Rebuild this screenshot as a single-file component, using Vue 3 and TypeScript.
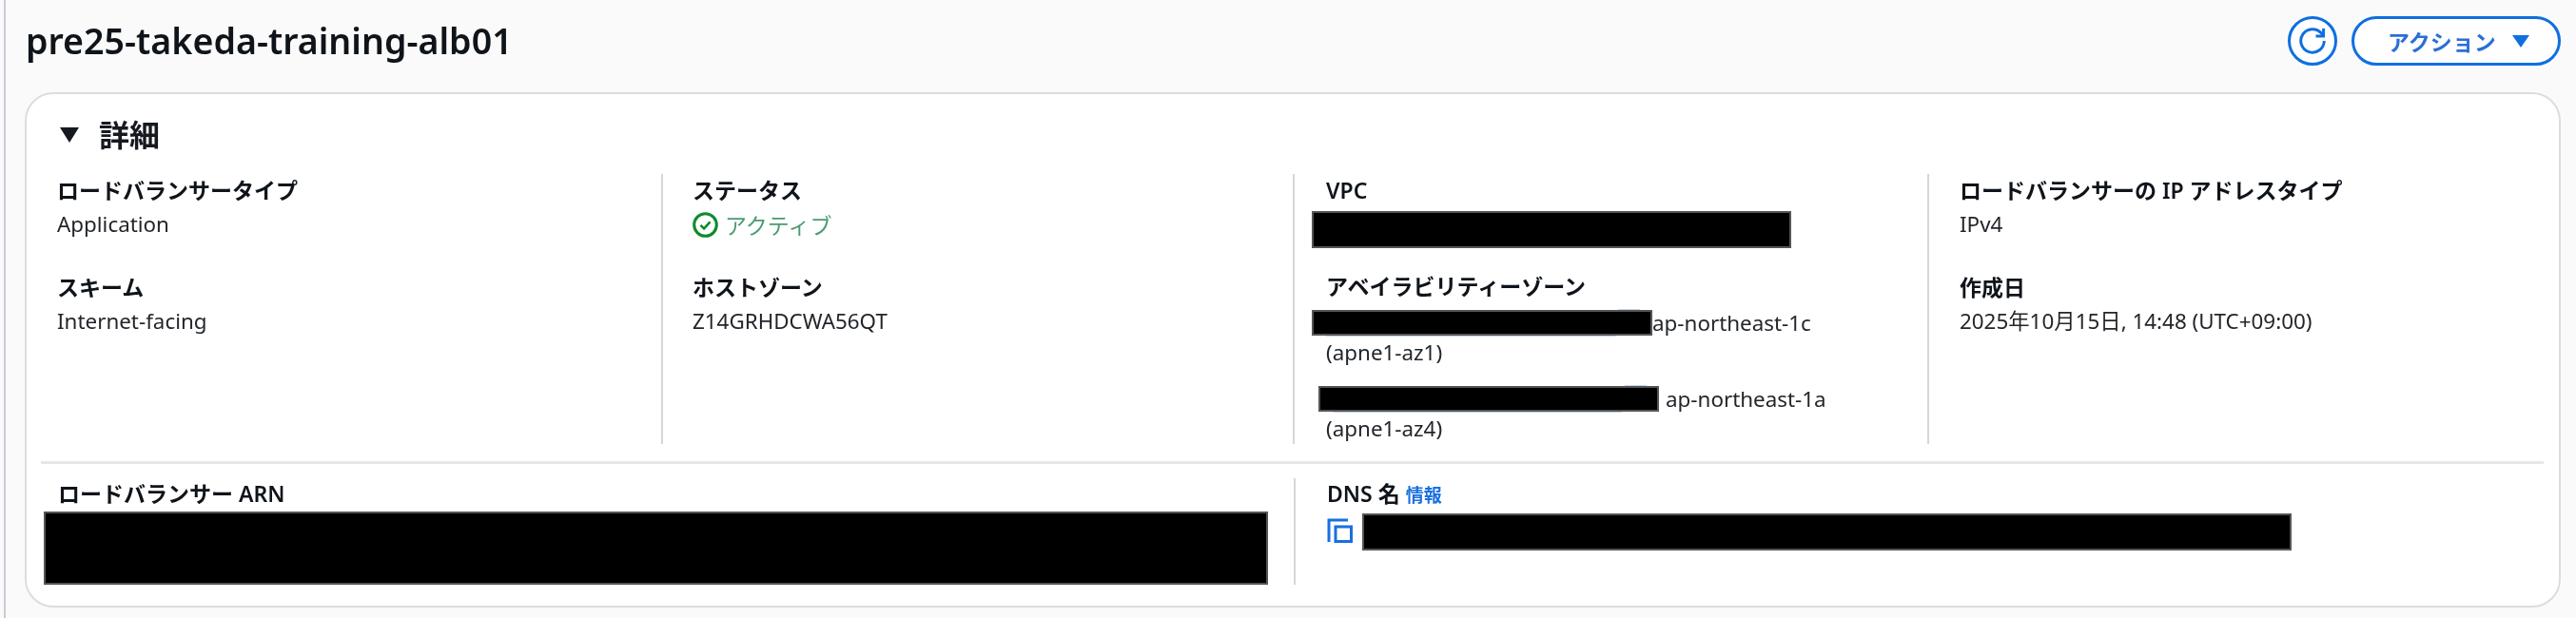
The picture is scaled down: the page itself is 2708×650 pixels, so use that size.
<script setup lang="ts">
interface Field {
  label: string
  value: string
}

const firstColumn: Field[] = [
  { label: 'ロードバランサータイプ', value: 'Application' },
  { label: 'スキーム', value: 'Internet-facing' }
]

const lastColumn: Field[] = [
  { label: 'ロードバランサーの IP アドレスタイプ', value: 'IPv4' },
  { label: '作成日', value: '2025年10月15日, 14:48 (UTC+09:00)' }
]
</script>

<template>
  <div class="page">
    <header class="page-header">
      <h1>pre25-takeda-training-alb01</h1>
      <div class="actions">
        <button type="button" class="refresh" aria-label="更新">
          <svg width="28" height="28" viewBox="0 0 16 16" fill="none" stroke="currentColor" stroke-width="1.7">
            <path d="M10 5.2h4.6V.6" />
            <path d="M15 8a7 7 0 1 1-1.6-4.5l1.2 1.7" />
          </svg>
        </button>
        <button type="button" class="action-button">
          <span>アクション</span>
          <i class="caret"></i>
        </button>
      </div>
    </header>

    <section class="card">
      <h2><i class="heading-caret"></i>詳細</h2>

      <div class="details">
        <div class="col col-first">
          <div v-for="item in firstColumn" :key="item.label" class="field">
            <div class="label">{{ item.label }}</div>
            <div class="value">{{ item.value }}</div>
          </div>
        </div>

        <div class="col col-second">
          <div class="field">
            <div class="label">ステータス</div>
            <div class="status">
              <svg width="27" height="27" viewBox="0 0 27 27" fill="none" stroke="#0d8a2e">
                <circle cx="13.5" cy="13.5" r="11.8" stroke-width="3" />
                <path d="M8.5 13.8l3.6 3.6 6.4-7" stroke-width="2.6" />
              </svg>
              <span>アクティブ</span>
            </div>
          </div>
          <div class="field">
            <div class="label">ホストゾーン</div>
            <div class="value">Z14GRHDCWA56QT</div>
          </div>
        </div>

        <div class="col col-third">
          <div class="label">VPC</div>
          <div class="redacted vpc-box"></div>
          <div class="label az-label">アベイラビリティーゾーン</div>
          <div class="az-row">
            <div class="redacted az-box az-one"></div>
            <span class="value">ap-northeast-1c</span>
          </div>
          <div class="value az-id">(apne1-az1)</div>
          <div class="az-row az-row-second">
            <div class="redacted az-box az-two"></div>
            <span class="value">ap-northeast-1a</span>
          </div>
          <div class="value az-id">(apne1-az4)</div>
        </div>

        <div class="col col-last">
          <div v-for="item in lastColumn" :key="item.label" class="field">
            <div class="label">{{ item.label }}</div>
            <div class="value">{{ item.value }}</div>
          </div>
        </div>
      </div>

      <div class="divider"></div>

      <div class="bottom">
        <div class="arn">
          <div class="label">ロードバランサー ARN</div>
          <div class="redacted arn-box"></div>
        </div>
        <div class="dns">
          <div class="label">DNS 名 <a class="info">情報</a></div>
          <div class="dns-row">
            <svg class="copy" width="27" height="26" viewBox="0 0 27 26" fill="none" stroke="#1a6fe0" stroke-width="3">
              <path d="M2 25V2h20" />
              <rect x="9" y="9" width="16.5" height="15.5" />
            </svg>
            <div class="redacted dns-box"></div>
          </div>
        </div>
      </div>
    </section>
  </div>
</template>

<style>
html,
body {
  margin: 0;
  background: #fafafa;
}
</style>

<style scoped>
.page {
  box-sizing: border-box;
  height: 650px;
  margin-left: 4px;
  padding: 17px 16px 0 20px;
  border-left: 2px solid #c8cbd6;
  background: #fafafa;
  overflow: hidden;
  font-family: "Noto Sans", "Noto Sans CJK JP", sans-serif;
  color: #16191f;
  filter: blur(0.5px);
}

.page-header {
  display: flex;
  align-items: center;
  justify-content: space-between;
  height: 52px;
  margin-bottom: 28px;
}

h1 {
  margin: 0 0 0 1px;
  font-size: 37.6px;
  font-weight: 600;
  line-height: 52px;
  color: #0f141a;
}

.actions {
  display: flex;
  gap: 15px;
}

.refresh {
  display: flex;
  align-items: center;
  justify-content: center;
  width: 52px;
  height: 52px;
  padding: 0;
  border: 3px solid #0f6fe0;
  border-radius: 50%;
  background: #fff;
  color: #0f6fe0;
}

.action-button {
  display: flex;
  align-items: center;
  box-sizing: border-box;
  width: 220px;
  height: 52px;
  padding: 0 0 0 35px;
  border: 3px solid #0f6fe0;
  border-radius: 26px;
  background: #fff;
  color: #2a6fd6;
  font-family: inherit;
  font-size: 23px;
  font-weight: 600;
}

.caret {
  width: 0;
  height: 0;
  margin-left: 17px;
  border-left: 9px solid transparent;
  border-right: 9px solid transparent;
  border-top: 13px solid #0f6fe0;
}

.card {
  box-sizing: border-box;
  height: 542px;
  padding: 23px 16px 0 15px;
  border: 2px solid #dcdce2;
  border-radius: 30px;
  background: #fff;
}

h2 {
  display: flex;
  align-items: center;
  height: 40px;
  margin: 0 0 21px;
  padding-left: 20px;
  font-size: 32px;
  font-weight: 600;
  line-height: 40px;
}

.heading-caret {
  width: 0;
  height: 0;
  margin-right: 21px;
  border-left: 10px solid transparent;
  border-right: 10px solid transparent;
  border-top: 16px solid #16191f;
}

.details {
  display: grid;
  grid-template-columns: 652px 664px 667px 1fr;
  height: 284px;
}

.col {
  box-sizing: border-box;
  padding-top: 2px;
  border-left: 2px solid #d5d6dc;
}

.col-first {
  padding-left: 17px;
  border-left: none;
}

.col-second {
  padding-left: 31px;
}

.col-third {
  padding-left: 33px;
}

.col-last {
  padding-left: 32px;
}

.field {
  margin-bottom: 36px;
}

.label {
  font-size: 23px;
  font-weight: 600;
  line-height: 30px;
  color: #0f141a;
}

.value {
  font-size: 22.4px;
  line-height: 30px;
  color: #22262b;
}

.field .label {
  margin-bottom: 6px;
}

.status {
  display: flex;
  align-items: center;
  gap: 7px;
  height: 30px;
  font-size: 23px;
  color: #4c9a72;
}

.redacted {
  box-sizing: border-box;
  flex-shrink: 0;
  border: 2px solid #555;
  background: #000;
}

.vpc-box {
  width: 504px;
  height: 39px;
  margin: 7px 0 0 -15px;
}

.az-label {
  margin-top: 25px;
}

.az-row {
  display: flex;
  align-items: center;
  height: 27px;
  margin-top: 10px;
}

.az-row-second {
  margin-top: 20px;
}

.az-box {
  position: relative;
  width: 358px;
  height: 27px;
}

/* link underline and external icon peeking out from under the redaction */
.az-box::before,
.az-box::after {
  content: "";
  position: absolute;
  height: 1px;
  background: #c3d6f5;
}

.az-box::after {
  top: calc(100% + 2px);
  left: 13px;
  width: 304px;
}

.az-box::before {
  bottom: calc(100% + 2px);
  left: 320px;
  width: 23px;
}

.az-one {
  margin-left: -15px;
}

.az-two {
  margin: 0 7px 0 -8px;
}

.az-id {
  margin-top: 3px;
}

.divider {
  height: 3px;
  margin-top: 18px;
  background: #e6e6eb;
}

.bottom {
  display: grid;
  grid-template-columns: 1317px 1fr;
  height: 102px;
  margin-top: 15px;
}

.arn {
  padding: 1px 0 0 18px;
}

.arn-box {
  width: 1287px;
  height: 77px;
  margin: 4px 0 0 -15px;
}

.dns {
  padding: 1px 0 0 33px;
  border-left: 2px solid #d5d6dc;
}

.info {
  margin-left: 0;
  font-size: 19px;
  color: #1a6fe0;
}

.dns-row {
  display: flex;
  gap: 10px;
  margin-top: 4px;
}

.copy {
  margin-top: 5px;
}

.dns-box {
  width: 977px;
  height: 39px;
}
</style>
